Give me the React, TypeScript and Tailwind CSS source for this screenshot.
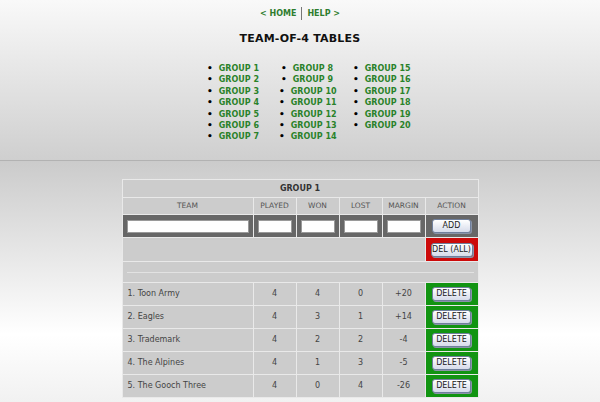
import React from 'react';

const groups = [
  ['GROUP 1', 'GROUP 2', 'GROUP 3', 'GROUP 4', 'GROUP 5', 'GROUP 6', 'GROUP 7'],
  ['GROUP 8', 'GROUP 9', 'GROUP 10', 'GROUP 11', 'GROUP 12', 'GROUP 13', 'GROUP 14'],
  ['GROUP 15', 'GROUP 16', 'GROUP 17', 'GROUP 18', 'GROUP 19', 'GROUP 20'],
];

const teams = [
  { name: '1. Toon Army', played: 4, won: 4, lost: 0, margin: '+20' },
  { name: '2. Eagles', played: 4, won: 3, lost: 1, margin: '+14' },
  { name: '3. Trademark', played: 4, won: 2, lost: 2, margin: '-4' },
  { name: '4. The Alpines', played: 4, won: 1, lost: 3, margin: '-5' },
  { name: '5. The Gooch Three', played: 4, won: 0, lost: 4, margin: '-26' },
];

const Button = ({ label, width }: { label: string; width: string }) => (
  <button
    className={`${width} h-[14px] rounded-[3px] border border-[#6f7f9c] bg-gradient-to-b from-white to-[#d6dbea] text-[8px] leading-none text-[#222] shadow-[1px_1px_0_#8a94a8]`}
  >
    {label}
  </button>
);

const cell = 'border border-[#e9e9e9] bg-[#cccccc] text-center';

const App = () => {
  return (
    <div className="w-[600px] h-[402px] overflow-hidden font-['DejaVu_Sans',Verdana,sans-serif]">
      <div className="h-[161px] bg-gradient-to-b from-[#f9f9f9] to-[#cfcfcf] border-b border-[#b2b2b2] flex flex-col items-center">
        <div className="mt-[7px] flex items-center text-[8px] font-bold text-[#2f7d2f] leading-none">
          <span>&lt; HOME</span>
          <span className="mx-[5px] w-px h-[13px] bg-[#777]" />
          <span>HELP &gt;</span>
        </div>
        <h1 className="mt-[13px] text-[11px] font-bold text-[#111] leading-none tracking-[0.2px]">
          TEAM-OF-4 TABLES
        </h1>
        <div className="mt-[19px] pl-[14px] flex gap-[18px]">
          {groups.map((col, i) => (
            <ul key={i} className="w-[56px] text-center">
              {col.map((g) => (
                <li key={g} className="h-[11.4px] text-[8px] leading-[11.4px] font-bold text-[#2a822a] whitespace-nowrap">
                  <span className="text-black text-[9px] mr-[6px]">•</span>
                  {g}
                </li>
              ))}
            </ul>
          ))}
        </div>
      </div>

      <div className="h-[241px] bg-[linear-gradient(to_bottom,#cbcbcb_0%,#ffffff_72%,#f1f1f1_100%)] pt-[18px]">
        <table className="mx-auto w-[356px] border-collapse border border-[#b9b9b9] text-[8px] text-[#444] table-fixed">
          <colgroup>
            <col className="w-[131px]" />
            <col className="w-[43px]" />
            <col className="w-[43px]" />
            <col className="w-[43px]" />
            <col className="w-[43px]" />
            <col className="w-[53px]" />
          </colgroup>
          <tbody>
            <tr className="h-[18px]">
              <td colSpan={6} className={`${cell} font-bold text-[#333]`}>GROUP 1</td>
            </tr>
            <tr className="h-[17px] text-[7.5px] text-[#555]">
              <td className={cell}>TEAM</td>
              <td className={cell}>PLAYED</td>
              <td className={cell}>WON</td>
              <td className={cell}>LOST</td>
              <td className={cell}>MARGIN</td>
              <td className={cell}>ACTION</td>
            </tr>
            <tr className="h-[23px]">
              <td className="border border-[#e9e9e9] bg-[#676767] px-[4px]">
                <input className="block w-full h-[13px] bg-white border border-[#9a9a9a]" />
              </td>
              {[0, 1, 2, 3].map((i) => (
                <td key={i} className="border border-[#e9e9e9] bg-[#676767] px-[4px]">
                  <input className="block w-full h-[13px] bg-white border border-[#9a9a9a]" />
                </td>
              ))}
              <td className="border border-[#e9e9e9] bg-[#676767] text-center">
                <Button label="ADD" width="w-[39px]" />
              </td>
            </tr>
            <tr className="h-[24px]">
              <td colSpan={5} className={cell} />
              <td className="border border-[#e9e9e9] bg-[#cc0a0a] text-center">
                <Button label="DEL (ALL)" width="w-[42px]" />
              </td>
            </tr>
            <tr className="h-[21px]">
              <td colSpan={6} className={`${cell} px-[4px]`}>
                <div className="h-px bg-[#a9a9a9] border-b border-[#e2e2e2]" />
              </td>
            </tr>
            {teams.map((t) => (
              <tr key={t.name} className="h-[23px]">
                <td className={`${cell} text-left pl-[5px]`}>{t.name}</td>
                <td className={cell}>{t.played}</td>
                <td className={cell}>{t.won}</td>
                <td className={cell}>{t.lost}</td>
                <td className={cell}>{t.margin}</td>
                <td className="border border-[#e9e9e9] bg-[#119411] text-center">
                  <Button label="DELETE" width="w-[39px]" />
                </td>
              </tr>
            ))}
          </tbody>
        </table>
      </div>
    </div>
  );
};

export default App;
